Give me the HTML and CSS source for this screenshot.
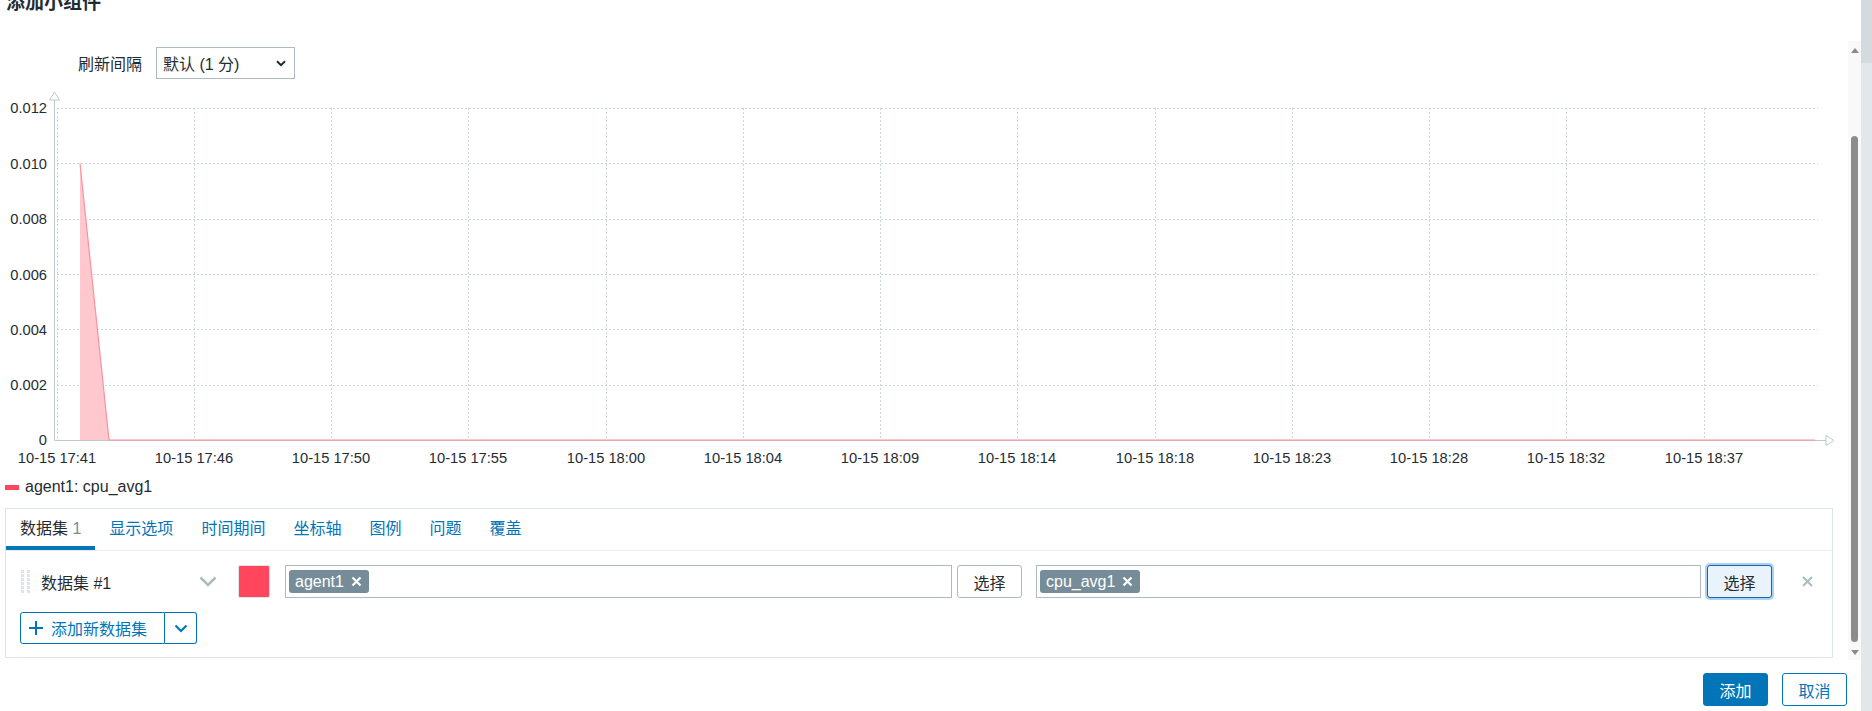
FILE: index.html
```html
<!DOCTYPE html>
<html lang="zh-CN">
  <head>
    <meta charset="UTF-8" />
    <meta name="viewport" content="width=device-width, initial-scale=1.0" />
    <title>添加小组件</title>
    <link rel="stylesheet" href="styles.css">
  </head>
  <body>
    <div class="page">
      <div class="dialogue">
        <header class="dialogue-head">
          <h4>添加小组件</h4>
        </header>

        <div class="dialogue-main">
          <div class="dialogue-body">
            <!-- Refresh interval -->
            <div class="form-row">
              <label class="form-label">刷新间隔</label>
              <div class="select">
                <span>默认 (1 分)</span>
                <svg class="chevron" width="10" height="7" viewBox="0 0 10 7"><path d="M1 1.2 L5 5.2 L9 1.2" /></svg>
              </div>
            </div>

            <!-- Graph preview -->
            <svg class="graph" width="1848" height="395" viewBox="0 0 1848 395">
              <path class="grid" d="M57.5 28 V360 M194.5 28 V360 M331.5 28 V360 M468.5 28 V360 M606.5 28 V360 M743.5 28 V360 M880.5 28 V360 M1017.5 28 V360 M1155.5 28 V360 M1292.5 28 V360 M1429.5 28 V360 M1566.5 28 V360 M1704.5 28 V360" />
              <path class="grid" d="M57 28.5 H1818 M57 83.5 H1818 M57 139.5 H1818 M57 194.5 H1818 M57 249.5 H1818 M57 305.5 H1818" />

              <polygon class="area" points="80,360 80,83.5 109,360" />
              <path class="axis" d="M54.5 19 V360.5 H1826" />
              <polygon class="axis-arrow" points="49.5,20 54.5,12 59.5,20" />
              <polygon class="axis-arrow" points="1826,355.5 1834,360.5 1826,365.5" />
              <path class="series" d="M80 83.5 L109 360 L1815 360" />

              <g class="y-labels">
                <text x="47" y="33">0.012</text>
                <text x="47" y="88.5">0.010</text>
                <text x="47" y="144">0.008</text>
                <text x="47" y="199.5">0.006</text>
                <text x="47" y="254.5">0.004</text>
                <text x="47" y="310">0.002</text>
                <text x="47" y="365">0</text>
              </g>
              <g class="x-labels">
                <text x="57" y="383">10-15 17:41</text>
                <text x="194" y="383">10-15 17:46</text>
                <text x="331" y="383">10-15 17:50</text>
                <text x="468" y="383">10-15 17:55</text>
                <text x="606" y="383">10-15 18:00</text>
                <text x="743" y="383">10-15 18:04</text>
                <text x="880" y="383">10-15 18:09</text>
                <text x="1017" y="383">10-15 18:14</text>
                <text x="1155" y="383">10-15 18:18</text>
                <text x="1292" y="383">10-15 18:23</text>
                <text x="1429" y="383">10-15 18:28</text>
                <text x="1566" y="383">10-15 18:32</text>
                <text x="1704" y="383">10-15 18:37</text>
              </g>
            </svg>

            <div class="legend">
              <span class="legend-swatch"></span>
              <span>agent1: cpu_avg1</span>
            </div>

            <!-- Tabs -->
            <div class="tabs-panel">
              <ul class="tabs">
                <li class="tab active">数据集 <span class="tab-count">1</span></li>
                <li class="tab">显示选项</li>
                <li class="tab">时间期间</li>
                <li class="tab">坐标轴</li>
                <li class="tab">图例</li>
                <li class="tab">问题</li>
                <li class="tab">覆盖</li>
              </ul>

              <div class="tab-content">
                <div class="dataset-row">
                  <svg class="drag-handle" width="9" height="24" viewBox="0 0 9 24">
                    <path d="M0 0h3v3H0zM6 0h3v3H6zM0 4h3v3H0zM6 4h3v3H6zM0 8h3v3H0zM6 8h3v3H6zM0 12h3v3H0zM6 12h3v3H6zM0 16h3v3H0zM6 16h3v3H6zM0 20h3v3H0zM6 20h3v3H6z" />
                  </svg>
                  <span class="dataset-label">数据集 #1</span>
                  <svg class="dataset-toggle" width="18" height="11" viewBox="0 0 18 11"><path d="M1.5 1.5 L9 9 L16.5 1.5" /></svg>
                  <span class="color-swatch"></span>

                  <div class="multiselect ms-hosts">
                    <span class="tag">agent1<svg class="tag-x" width="11" height="11" viewBox="0 0 11 11"><path d="M1.5 1.5 L9.5 9.5 M9.5 1.5 L1.5 9.5" /></svg></span>
                  </div>
                  <button class="btn-grey btn-select">选择</button>

                  <div class="multiselect ms-items">
                    <span class="tag">cpu_avg1<svg class="tag-x" width="11" height="11" viewBox="0 0 11 11"><path d="M1.5 1.5 L9.5 9.5 M9.5 1.5 L1.5 9.5" /></svg></span>
                  </div>
                  <button class="btn-grey btn-select focused">选择</button>

                  <svg class="remove-x" width="11" height="11" viewBox="0 0 11 11"><path d="M1 1 L10 10 M10 1 L1 10" /></svg>
                </div>

                <div class="btn-split">
                  <button class="btn-split-main">
                    <svg class="plus" width="14" height="14" viewBox="0 0 14 14"><path d="M7 0 V14 M0 7 H14" /></svg>
                    添加新数据集
                  </button>
                  <button class="btn-split-toggle">
                    <svg width="14" height="9" viewBox="0 0 14 9"><path d="M1.5 1.5 L7 7 L12.5 1.5" /></svg>
                  </button>
                </div>
              </div>
            </div>
          </div>

          <div class="scrollbar">
            <span class="scroll-arrow up"></span>
            <span class="scroll-thumb"></span>
            <span class="scroll-arrow down"></span>
          </div>
        </div>

        <footer class="dialogue-foot">
          <button class="btn">添加</button>
          <button class="btn-alt">取消</button>
        </footer>
      </div>

      <div class="page-scroll">
        <div class="page-scroll-thumb"></div>
      </div>
    </div>
  </body>
</html>
```

FILE: styles.css
```css
/* Reset and Base Styles */
* {
  margin: 0;
  padding: 0;
  box-sizing: border-box;
}

html,
body {
  height: 100%;
  overflow: hidden;
}

body {
  font-family: "Liberation Sans", Arial, "Noto Sans CJK SC", sans-serif;
  font-size: 16px;
  color: #1f2c33;
  background: #fff;
}

button {
  font: inherit;
  cursor: pointer;
}

.page {
  display: flex;
  height: 711px;
}

/* Dialogue */
.dialogue {
  width: 1861px;
  display: flex;
  flex-direction: column;
}

.dialogue-head {
  height: 41px;
  padding-left: 6px;
  overflow: hidden;
}

.dialogue-head h4 {
  font-size: 19px;
  line-height: 19px;
  font-weight: bold;
  margin-top: -7px;
}

.dialogue-main {
  height: 619px;
  display: flex;
}

.dialogue-body {
  width: 1848px;
  padding-top: 6px;
}

/* Form row */
.form-row {
  display: flex;
  align-items: center;
  height: 32px;
}

.form-label {
  width: 142px;
  margin-right: 14px;
  text-align: right;
}

.select {
  width: 139px;
  height: 32px;
  border: 1px solid #acbbc2;
  display: flex;
  align-items: center;
  justify-content: space-between;
  padding: 0 8px 0 6px;
}

.chevron path {
  fill: none;
  stroke: #1f2c33;
  stroke-width: 2;
}

/* Graph */
.graph {
  display: block;
  margin-top: 1px;
}

.graph .grid {
  fill: none;
  stroke: #ccd5d9;
  stroke-width: 1;
  stroke-dasharray: 2 2;
}

.graph .axis {
  fill: none;
  stroke: #bfc9ce;
  stroke-width: 1;
}

.graph .axis-arrow {
  fill: #fff;
  stroke: #bfc9ce;
  stroke-width: 1;
}

.graph .area {
  fill: #ffc8ce;
}

.graph .series {
  fill: none;
  stroke: #ff8f9c;
  stroke-width: 1.2;
}

.graph text {
  font-family: "Liberation Sans", Arial, sans-serif;
  font-size: 14.7px;
  fill: #1f2c33;
}

.graph .y-labels text {
  text-anchor: end;
}

.graph .x-labels text {
  text-anchor: middle;
}

/* Legend */
.legend {
  display: flex;
  align-items: center;
  height: 24px;
  padding-left: 5px;
  margin-bottom: 9px;
}

.legend-swatch {
  width: 14px;
  height: 5px;
  background: #ff465c;
  margin-right: 6px;
}

/* Tabs */
.tabs-panel {
  margin: 0 15px 0 5px;
  border: 1px solid #dfe4e7;
}

.tabs {
  display: flex;
  list-style: none;
  border-bottom: 1px solid #ebeef0;
}

.tab {
  height: 41px;
  line-height: 40px;
  padding: 0 14px;
  color: #0275b8;
}

.tab.active {
  color: #1f2c33;
  box-shadow: inset 0 -4px 0 #0275b8;
}

.tab-count {
  color: #768d99;
}

.tab-content {
  padding: 14px 0 13px;
}

/* Dataset row */
.dataset-row {
  display: flex;
  align-items: center;
  height: 33px;
  padding-left: 15px;
}

.drag-handle path {
  fill: #dfe4e7;
}

.dataset-label {
  width: 158px;
  margin-left: 11px;
}

.dataset-toggle path {
  fill: none;
  stroke: #acbbc2;
  stroke-width: 2.5;
}

.color-swatch {
  width: 32px;
  height: 33px;
  margin-left: 21px;
  background: #ff465c;
  border: 1px solid #dfe4e7;
  border-radius: 2px;
}

.multiselect {
  height: 33px;
  border: 1px solid #acbbc2;
  display: flex;
  align-items: center;
  padding-left: 3px;
}

.ms-hosts {
  width: 667px;
  margin-left: 15px;
}

.ms-items {
  width: 665px;
  margin-left: 14px;
}

.tag {
  display: flex;
  align-items: center;
  height: 23px;
  padding: 0 7px 0 6px;
  background: #768d99;
  color: #fff;
  border-radius: 3px;
}

.tag-x {
  margin-left: 7px;
}

.tag-x path {
  stroke: #fff;
  stroke-width: 2.2;
}

.btn-grey {
  height: 33px;
  width: 65px;
  background: #fff;
  color: #1f2c33;
  border: 1px solid #acbbc2;
  border-radius: 3px;
}

.btn-select {
  margin-left: 5px;
}

.btn-select.focused {
  margin-left: 6px;
  background: #e8f3fc;
  border-color: #1f65a6;
  box-shadow: 0 0 0 2px #a9d2f2;
}

.remove-x {
  margin-left: 30px;
}

.remove-x path {
  stroke: #acbbc2;
  stroke-width: 2;
}

/* Add dataset split button */
.btn-split {
  display: flex;
  margin: 14px 0 0 14px;
  height: 32px;
}

.btn-split button {
  background: #fff;
  color: #0275b8;
  border: 1px solid #0275b8;
  display: flex;
  align-items: center;
}

.btn-split-main {
  width: 145px;
  padding-left: 8px;
  border-radius: 3px 0 0 3px;
}

.btn-split-main .plus {
  margin-right: 8px;
}

.btn-split-main .plus path {
  stroke: #0275b8;
  stroke-width: 2;
}

.btn-split-toggle {
  width: 32px;
  border-left: 0 !important;
  border-radius: 0 3px 3px 0;
  justify-content: center;
}

.btn-split-toggle path {
  fill: none;
  stroke: #0275b8;
  stroke-width: 2.2;
}

/* Dialogue scrollbar */
.scrollbar {
  width: 13px;
  background: #f9f9f9;
  display: flex;
  flex-direction: column;
  align-items: center;
  padding-top: 7px;
}

.scroll-arrow {
  width: 0;
  height: 0;
  border-left: 4px solid transparent;
  border-right: 4px solid transparent;
}

.scroll-arrow.up {
  border-bottom: 5px solid #8a8a8a;
}

.scroll-arrow.down {
  border-top: 5px solid #8a8a8a;
  margin-top: 8px;
}

.scroll-thumb {
  width: 7px;
  height: 506px;
  margin-top: 83px;
  background: #8c8c8c;
  border-radius: 4px;
}

/* Footer */
.dialogue-foot {
  flex: 1;
  display: flex;
  justify-content: flex-end;
  align-items: flex-start;
  gap: 14px;
  padding: 13px 14px 0 0;
}

.btn,
.btn-alt {
  width: 65px;
  height: 33px;
  border: 1px solid #0275b8;
  border-radius: 3px;
}

.btn {
  background: #0275b8;
  color: #fff;
}

.btn-alt {
  background: #fff;
  color: #0275b8;
}

/* Page scrollbar */
.page-scroll {
  width: 11px;
  background: #e3e7ea;
}

.page-scroll-thumb {
  height: 63px;
  background: #d4dbdf;
}
```
